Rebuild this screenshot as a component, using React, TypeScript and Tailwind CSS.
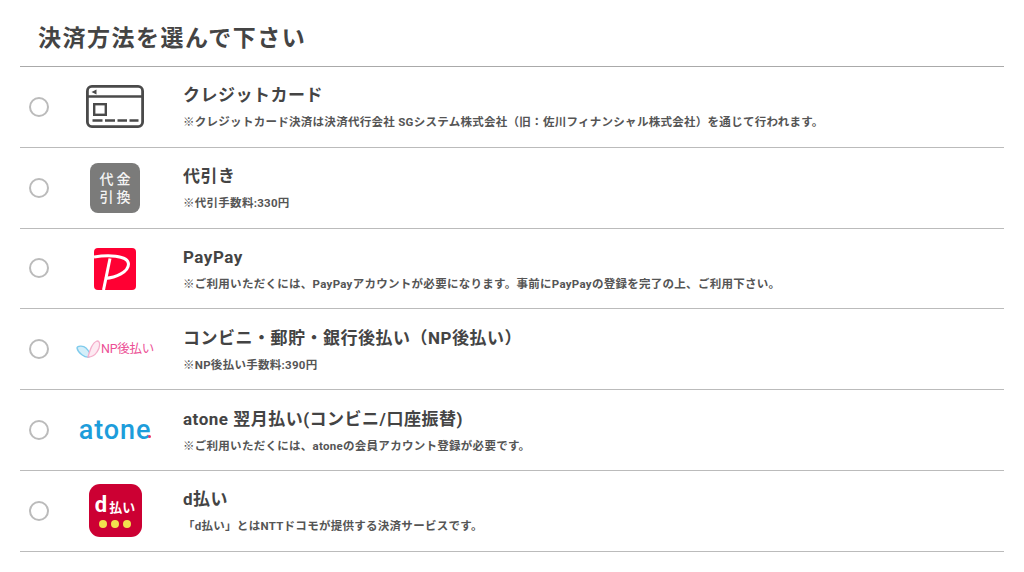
import React from "react";

const CardIcon = () => (
  <svg className="mr-[1px]" width="58" height="43" viewBox="0 0 58 43" fill="none">
    <rect x="1.4" y="1.4" width="55.2" height="40.2" rx="4.5" stroke="#4a4a4a" strokeWidth="2.8" />
    <path d="M1.5 11.5H56.5" stroke="#4a4a4a" strokeWidth="2.4" />
    <path d="M5.5 7L10.5 4.5V9.5Z" fill="#4a4a4a" />
    <rect x="8.2" y="19.2" width="11.6" height="10.6" stroke="#4a4a4a" strokeWidth="2.4" />
    <path d="M6.5 35.5H16.5M19 35.5H29M31.5 35.5H41M43.5 35.5H52.5" stroke="#4a4a4a" strokeWidth="2.4" />
  </svg>
);

const CodIcon = () => (
  <div className="flex h-[50px] w-[50px] flex-col items-center justify-center rounded-[8px] bg-[#7b7b7a] text-[14px] leading-[18px] font-medium tracking-[3px] text-[#f4f4f4]">
    <span className="pl-[3px]">代金</span>
    <span className="pl-[3px]">引換</span>
  </div>
);

const PayPayIcon = () => (
  <svg className="mt-[1px]" width="42" height="42" viewBox="0 0 42 42">
    <rect width="42" height="42" rx="4" fill="#ff0033" />
    <path d="M0 9C12 7 34 6.5 34.5 16C34.5 24 22 29.5 11 30.5" fill="none" stroke="#fff" strokeWidth="3" />
    <path d="M16 10.5L9.5 42" fill="none" stroke="#fff" strokeWidth="3" />
  </svg>
);

const NpIcon = () => (
  <div className="flex shrink-0 items-center whitespace-nowrap">
    <svg className="shrink-0" width="25" height="19" viewBox="0 0 25 19" fill="none">
      <path d="M1 8C1 6 7 5 10 8C13 11 15 15 13 17C9 18 2 13 1 8Z" fill="#d4eef9" stroke="#7fcbec" strokeWidth="1.3" />
      <path d="M12 17C14 10 16 3 21 1C25 1 24 8 21 12C19 15 16 17 12 17Z" fill="#fdeaf2" stroke="#f4aecb" strokeWidth="1.3" />
    </svg>
    <span className="text-[12.5px] leading-none font-normal tracking-[-0.3px] text-[#ec4f95]">NP後払い</span>
  </div>
);

const AtoneIcon = () => (
  <div className="relative text-[27px] leading-none font-medium tracking-[0.9px] text-[#1d9ddb]">
    atone
    <span className="absolute right-[0px] bottom-[6px] h-[3px] w-[3px] rounded-full bg-[#e8336d]" />
  </div>
);

const DPayIcon = () => (
  <div className="flex h-[53px] w-[53px] flex-col items-center justify-center rounded-[11px] bg-[#cc0033]">
    <div className="flex items-baseline leading-none text-white">
      <span className="text-[22px] leading-[22px] font-bold">d</span>
      <span className="ml-[2px] text-[13px] font-bold">払い</span>
    </div>
    <div className="mt-[4px] flex gap-[4px]">
      <span className="h-2 w-2 rounded-full bg-[#f2e04e]" />
      <span className="h-2 w-2 rounded-full bg-[#f2e04e]" />
      <span className="h-2 w-2 rounded-full bg-[#f2e04e]" />
    </div>
  </div>
);

const methods = [
  {
    icon: <CardIcon />,
    title: "クレジットカード",
    note: "※クレジットカード決済は決済代行会社 SGシステム株式会社（旧：佐川フィナンシャル株式会社）を通じて行われます。",
  },
  { icon: <CodIcon />, title: "代引き", note: "※代引手数料:330円" },
  {
    icon: <PayPayIcon />,
    title: "PayPay",
    note: "※ご利用いただくには、PayPayアカウントが必要になります。事前にPayPayの登録を完了の上、ご利用下さい。",
  },
  { icon: <NpIcon />, title: "コンビニ・郵貯・銀行後払い（NP後払い）", note: "※NP後払い手数料:390円" },
  {
    icon: <AtoneIcon />,
    title: "atone 翌月払い(コンビニ/口座振替)",
    note: "※ご利用いただくには、atoneの会員アカウント登録が必要です。",
  },
  { icon: <DPayIcon />, title: "d払い", note: "「d払い」とはNTTドコモが提供する決済サービスです。" },
];

const App = () => {
  return (
    <div className="h-[572px] w-[1024px] overflow-hidden bg-white font-['Roboto','Noto_Sans_CJK_JP',sans-serif] text-[#444]">
      <div className="mx-5 w-[984px]">
        <h2 className="flex h-[67px] items-center border-b border-[#aaa] pt-[12px] pl-[18px] text-[23px] font-bold tracking-[1.5px]">
          決済方法を選んで下さい
        </h2>
        {methods.map((m) => (
          <div key={m.title} className="flex h-[80.8px] items-center border-b border-[#bbb]">
            <span className="ml-[9px] h-5 w-5 shrink-0 rounded-full border-2 border-[#bbb]" />
            <div className="ml-[26px] flex w-[80px] shrink-0 items-center justify-center">{m.icon}</div>
            <div className="ml-[28px] min-w-0">
              <div className="text-[17px] leading-[24px] font-bold tracking-[0.5px]">{m.title}</div>
              <div className="mt-[7px] text-[11.5px] leading-[16px] font-bold tracking-[0.28px] text-[#555]">{m.note}</div>
            </div>
          </div>
        ))}
      </div>
    </div>
  );
};

export default App;
